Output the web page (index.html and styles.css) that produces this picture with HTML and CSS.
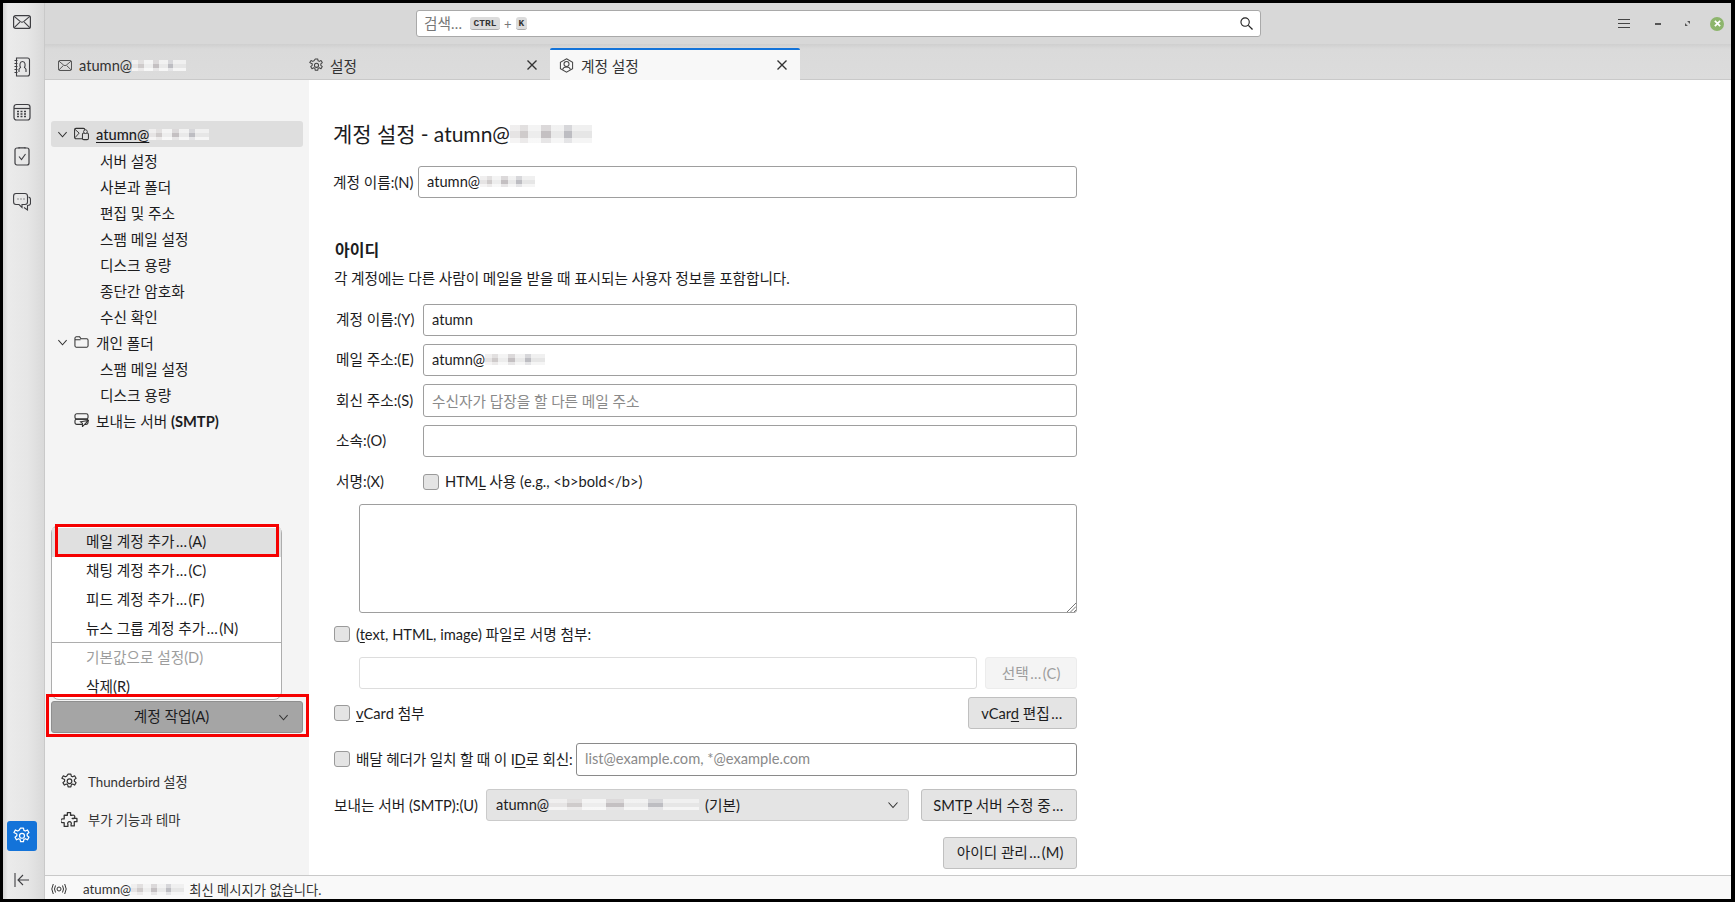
FILE: index.html
```html
<!DOCTYPE html>
<html lang="ko">
<head>
<meta charset="utf-8">
<title>계정 설정</title>
<link rel="stylesheet" href="styles.css">
</head>
<body>
<svg class="defs" width="0" height="0" aria-hidden="true">
  <symbol id="gear" viewBox="0 0 16 16"><path d="M6.7 1h2.600l.4 2 1.300.6 1.800-1 1.400 2.300-1.600 1.300v1.600l1.600 1.300-1.400 2.300-1.800-1-1.300.7-.4 2H6.700l-.4-2-1.300-.7-1.800 1-1.400-2.300 1.600-1.300V6.200L.8 4.900l1.400-2.300 1.800 1 1.300-.6z" fill="none" stroke="currentColor" stroke-width="1.100" stroke-linejoin="round"/><circle cx="8" cy="7.800" r="2.200" fill="none" stroke="currentColor" stroke-width="1.100"/></symbol>
  <symbol id="chev" viewBox="0 0 12 12"><path d="M1.500 3.500 6 8.500l4.500-5" fill="none" stroke="currentColor" stroke-width="1.100"/></symbol>
  <symbol id="mail" viewBox="0 0 18 14"><rect x=".6" y=".6" width="16.800" height="12.800" rx="2" fill="none" stroke="currentColor" stroke-width="1.200"/><path d="m1.200 1.400 6.200 5.200q1.600 1.200 3.200 0l6.200-5.200M1.200 12.600l5.600-5.400M16.800 12.600l-5.600-5.400" fill="none" stroke="currentColor" stroke-width="1.100"/></symbol>
  <symbol id="close" viewBox="0 0 12 12"><path d="m1.500 1.500 9 9m0-9-9 9" fill="none" stroke="currentColor" stroke-width="1.400"/></symbol>
</svg>
<div class="app">
  <nav class="rail">
    <svg class="rail-icon rail-mail"><use href="#mail"/></svg>
    <svg class="rail-icon" viewBox="0 0 18 20"><path d="M3.500 1h11a2 2 0 0 1 2 2v14a2 2 0 0 1-2 2h-11zM1.500 3.500h3m-3 3h3m-3 3h3m-3 3h3m-3 3h3M6 15v-2.500c0-1 .8-1.500 1.500-2-1-2-1-6 2-6s3 4 2 6c.7.5 1.500 1 1.500 2V15" fill="none" stroke="currentColor" stroke-width="1.100"/></svg>
    <svg class="rail-icon" viewBox="0 0 18 18"><rect x="1" y="1.500" width="16" height="15.500" rx="2.500" fill="none" stroke="currentColor" stroke-width="1.200"/><path d="M1 5.500h16" stroke="currentColor" stroke-width="1.200"/><path d="M4 8.500h2m1.500 0h2m1.500 0h2M4 11h2m1.500 0h2m1.500 0h2M4 13.500h2m1.500 0h2m1.500 0h2" stroke="currentColor" stroke-width="1.300"/></svg>
    <svg class="rail-icon" viewBox="0 1 18 20"><rect x="2" y="2" width="14" height="17" rx="2" fill="none" stroke="currentColor" stroke-width="1.200"/><path d="M6 2.500V1h6v1.500" fill="none" stroke="currentColor" stroke-width="1.100"/><path d="m6 10.500 2.500 3L12.500 8" fill="none" stroke="currentColor" stroke-width="1.100"/></svg>
    <svg class="rail-icon" viewBox="0 0 18 19"><path d="M3 1h9a2.500 2.500 0 0 1 2.500 2.500v6A2.500 2.500 0 0 1 12 12H9v3L6 12H3A2.500 2.500 0 0 1 .6 9.500v-6A2.500 2.500 0 0 1 3 1z" fill="none" stroke="currentColor" stroke-width="1.100"/><path d="M15.500 4.500q2 .5 2 2.500v4q0 2-3 2v4.500L11 15" fill="none" stroke="currentColor" stroke-width="1.100"/><path d="M4.500 6.500h1m2 0h1m2 0h1" stroke="currentColor" stroke-width="1.100"/></svg>
    <div class="rail-bottom">
      <span class="rail-active"><svg class="active-gear"><use href="#gear"/></svg></span>
      <svg class="rail-collapse" viewBox="0 0 16 16"><path d="M1 1v14M15 8H4m5-5L4 8l5 5" fill="none" stroke="currentColor" stroke-width="1.100"/></svg>
    </div>
  </nav>
  <div class="window">
    <header class="titlebar">
      <div class="search">
        <span class="search-text">검색…</span>
        <kbd class="key key-ctrl">CTRL</kbd><span class="plus">+</span><kbd class="key">K</kbd>
        <svg class="search-icon" viewBox="0 0 14 14"><circle cx="5.500" cy="5.500" r="4.500" fill="none" stroke="currentColor" stroke-width="1.200"/><path d="m9 9 4.500 4.500" stroke="currentColor" stroke-width="1.400"/></svg>
      </div>
      <div class="winbtns">
        <span class="hamburger"></span>
        <span class="minimize"></span>
        <svg class="restore" viewBox="0 0 6 6"><path d="M0 2.500V6h3.500zM6 3.500V0H2.500z" fill="#555"/></svg>
        <span class="winclose"><svg class="winclose-x" viewBox="0 0 8 8"><path d="m1 1 6 6m0-6-6 6" stroke="#fff" stroke-width="2"/></svg></span>
      </div>
    </header>
    <div class="tabbar">
      <div class="tab tab-first"><svg class="tab-icon tab-mail"><use href="#mail"/></svg><span>atumn@</span><span class="blur blur-54"></span></div>
      <div class="tab tab-second"><svg class="tab-icon"><use href="#gear"/></svg><span>설정</span><svg class="tab-close"><use href="#close"/></svg></div>
      <div class="tab tab-active"><svg class="tab-icon" viewBox="0 0 16 16"><path d="M8 .8 14.500 4.500v7L8 15.200 1.500 11.500v-7z" fill="none" stroke="currentColor" stroke-width="1.100"/><circle cx="8" cy="6.500" r="2.700" fill="none" stroke="currentColor" stroke-width="1.100"/><path d="M3.800 12.500q.7-3 4.200-3t4.200 3" fill="none" stroke="currentColor" stroke-width="1.100"/></svg><span>계정 설정</span><svg class="tab-close"><use href="#close"/></svg></div>
    </div>
    <div class="content">
      <aside class="sidebar">
        <div class="tree">
          <div class="row row-account"><svg class="twisty"><use href="#chev"/></svg><svg class="tree-icon" viewBox="0 0 16 14"><rect x=".6" y="1" width="11" height="11" rx="1.500" fill="none" stroke="currentColor" stroke-width="1.100"/><path d="m1 2 4.500 4L1 11" fill="none" stroke="currentColor" stroke-width="1"/><rect x="9" y="6" width="6.400" height="7" rx="1.500" fill="#dedede" stroke="currentColor" stroke-width="1.100"/><circle cx="12.200" cy="4.500" r="2" fill="#dedede" stroke="currentColor" stroke-width="1"/></svg><span class="account-name">atumn@</span><span class="blur blur-60"></span></div>
          <div class="row row-child">서버 설정</div>
          <div class="row row-child">사본과 폴더</div>
          <div class="row row-child">편집 및 주소</div>
          <div class="row row-child">스팸 메일 설정</div>
          <div class="row row-child">디스크 용량</div>
          <div class="row row-child">종단간 암호화</div>
          <div class="row row-child">수신 확인</div>
          <div class="row"><svg class="twisty"><use href="#chev"/></svg><svg class="tree-icon" viewBox="0 0 16 14"><path d="M1 3a1.500 1.500 0 0 1 1.500-1.500H6l1.500 2h6A1.500 1.500 0 0 1 15 5v6a1.500 1.500 0 0 1-1.500 1.500h-11A1.500 1.500 0 0 1 1 11zM1 4.500h6" fill="none" stroke="currentColor" stroke-width="1.100"/></svg><span>개인 폴더</span></div>
          <div class="row row-child">스팸 메일 설정</div>
          <div class="row row-child">디스크 용량</div>
          <div class="row row-server"><svg class="tree-icon" viewBox="0 0 16 15"><rect x="1" y=".8" width="14" height="5.700" rx="2" fill="none" stroke="currentColor" stroke-width="1.200"/><rect x="1" y="6.500" width="14" height="5.700" rx="2" fill="none" stroke="currentColor" stroke-width="1.200"/><path d="M9 14.500 15.500 8 7 9.500l2 1.500z" fill="#f4f4f4" stroke="currentColor" stroke-width="1.100"/></svg><span>보내는 서버 <b>(SMTP)</b></span></div>
        </div>
        <div class="side-bottom">
          <div class="action-wrap">
            <div class="popup">
              <div class="item item-hover">메일 계정 추가<span class="ell">…</span>(A)</div>
              <div class="item">채팅 계정 추가<span class="ell">…</span>(C)</div>
              <div class="item">피드 계정 추가<span class="ell">…</span>(F)</div>
              <div class="item item-last">뉴스 그룹 계정 추가<span class="ell">…</span>(N)</div>
              <div class="separator"></div>
              <div class="item item-disabled">기본값으로 설정(D)</div>
              <div class="item">삭제(R)</div>
              <div class="redbox redbox-item"></div>
            </div>
            <div class="action-btn"><span class="action-label">계정 작업(A)</span><svg class="action-chev"><use href="#chev"/></svg></div>
            <div class="redbox redbox-action"></div>
          </div>
          <div class="side-links">
            <div class="link"><svg class="link-icon"><use href="#gear"/></svg><span>Thunderbird 설정</span></div>
            <div class="link"><svg class="link-icon" viewBox="0 0 16 16"><path d="M6 1.500h3v2.500h1.500a1.700 1.700 0 1 1 0 3H15v3h-2.500v4h-3v-1.500a1.700 1.700 0 1 0-3 0V14.500H3V11H1.500a1.700 1.700 0 1 1 0-3.500H3V4h3z" fill="none" stroke="currentColor" stroke-width="1.200" stroke-linejoin="round"/></svg><span>부가 기능과 테마</span></div>
          </div>
        </div>
      </aside>
      <main class="pane">
        <h1 class="title">계정 설정 <span class="title-light">- atumn@</span><span class="blur blur-82"></span></h1>
        <div class="account-line">
          <label class="label-n">계정 이름:(N)</label>
          <div class="field field-grow"><span>atumn@</span><span class="blur blur-55"></span></div>
        </div>
        <h2 class="section">아이디</h2>
        <p class="desc">각 계정에는 다른 사람이 메일을 받을 때 표시되는 사용자 정보를 포함합니다.</p>
        <div class="idgrid">
          <label class="id-label">계정 이름:(Y)</label><div class="field">atumn</div>
          <label class="id-label">메일 주소:(E)</label><div class="field"><span>atumn@</span><span class="blur blur-60"></span></div>
          <label class="id-label">회신 주소:(S)</label><div class="field field-tall placeholder">수신자가 답장을 할 다른 메일 주소</div>
          <label class="id-label">소속:(O)</label><div class="field"></div>
          <label class="id-label">서명:(X)</label><div class="check-line"><span class="checkbox"></span><span>HTM<u>L</u> 사용 (e.g., &lt;b&gt;bold&lt;/b&gt;)</span></div>
        </div>
        <div class="textarea"><svg class="grip" viewBox="0 0 10 10"><path d="M10 1 1 10M10 4.500 4.500 10M10 8l-2 2" stroke="#777" stroke-width="1"/></svg></div>
        <div class="check-line line-file"><span class="checkbox"></span><span>(<u>t</u>ext, HTML, image) 파일로 서명 첨부:</span></div>
        <div class="file-line">
          <div class="field field-disabled field-grow"></div>
          <div class="btn btn-disabled btn-pick"><span>선택<span class="ell">…</span>(C)</span></div>
        </div>
        <div class="spread line-vcard">
          <div class="check-line"><span class="checkbox"></span><span><u>v</u>Card 첨부</span></div>
          <div class="btn btn-vcard"><span>vCar<u>d</u> 편집<span class="ell">…</span></span></div>
        </div>
        <div class="reply-line">
          <div class="check-line check-grow"><span class="checkbox"></span><span>배달 헤더가 일치 할 때 이 I<u>D</u>로 회신:</span></div>
          <div class="field field-tall field-dark field-reply placeholder">list@example.com, *@example.com</div>
        </div>
        <div class="smtp-line">
          <label>보내는 서버 (SMTP):(U)</label>
          <div class="select"><span>atumn@</span><span class="blur blur-150"></span><span class="select-default">(기본)</span><svg class="select-chev"><use href="#chev"/></svg></div>
          <div class="btn btn-smtp"><span>SMT<u>P</u> 서버 수정 중<span class="ell">…</span></span></div>
        </div>
        <div class="manage-line"><div class="btn btn-manage"><span>아이디 관리<span class="ell">…</span>(M)</span></div></div>
      </main>
    </div>
    <footer class="status">
      <svg class="status-icon" viewBox="0 0 16 12"><circle cx="8" cy="6" r="2" fill="none" stroke="currentColor"/><path d="M4.500 2.500q-2 3.500 0 7M11.500 2.500q2 3.500 0 7M2.300 1q-3 5 0 10M13.700 1q3 5 0 10" fill="none" stroke="currentColor"/></svg>
      <span>atumn@</span><span class="blur blur-53"></span><span class="status-msg">최신 메시지가 없습니다.</span>
    </footer>
  </div>
</div>
</body>
</html>
```
FILE: styles.css
```css
* { box-sizing: border-box; }
html, body { height: 100%; }
body {
  margin: 0;
  padding: 3px 4px 3px 3px;
  background: #000;
  color: #1c1c1e;
  font-family: Lato, "Noto Sans CJK KR", sans-serif;
  font-size: 14.67px;
  overflow: hidden;
}
.defs { position: absolute; }
svg { display: block; flex: none; }
u { text-underline-offset: 2px; }
.ell { margin: 0 1.500px; }

.app { display: grid; grid-template-columns: 42px 1fr; height: 896px; }

/* spaces rail */
.rail {
  display: flex;
  flex-direction: column;
  align-items: center;
  gap: 25px;
  padding: 9px 4px 0 0;
  color: #3e3e42;
  background: linear-gradient(90deg, #d4d4d4 0, #ebebeb 12%, #e6e6e6 60%, #d9d9d9 100%);
  border-right: 1px solid #c9c9c9;
}
.rail-icon { width: 18px; height: 20px; }
.rail-mail { height: 14px; margin: 3px 0; }
.rail-bottom { margin-top: auto; display: flex; flex-direction: column; align-items: center; padding-bottom: 11px; }
.rail-active { width: 30px; height: 30px; background: #1373d9; border-radius: 3px; display: flex; align-items: center; justify-content: center; color: #fff; }
.active-gear { width: 18px; height: 18px; }
.rail-collapse { width: 16px; height: 16px; margin-top: 21px; }

.window { display: flex; flex-direction: column; min-width: 0; }

/* title bar */
.titlebar { height: 41px; display: flex; align-items: center; padding: 0 7px 0 371px; background: #d8d8d8; }
.search {
  width: 845px;
  height: 27px;
  display: flex;
  align-items: center;
  padding: 0 7px;
  background: #fff;
  border: 1px solid #a9a9a9;
  border-radius: 3px;
  color: #777;
}
.search-text { width: 46px; padding-bottom: 2px; }
.key { height: 13px; padding: 0 3px; font: 700 9.500px/13px "Liberation Mono", monospace; color: #333; background: #dcdcdc; border-radius: 3px; border-bottom: 1px solid #aaa; }
.key-ctrl { width: 30px; text-align: center; padding: 0; }
.plus { margin: 0 4px; font-size: 13px; }
.search-icon { margin-left: auto; width: 13px; height: 13px; color: #222; }
.winbtns { margin-left: auto; display: flex; align-items: center; }
.hamburger { width: 12px; height: 9px; border-top: 1px solid #444; border-bottom: 1px solid #444; margin-right: 25px; background: linear-gradient(#444, #444) center / 100% 1px no-repeat; }
.minimize { width: 6px; height: 2px; background: #555; margin-right: 24px; }
.restore { width: 5px; height: 5px; margin-right: 20px; }
.winclose { width: 14px; height: 14px; border-radius: 50%; background: #8db56c; display: flex; align-items: center; justify-content: center; }
.winclose-x { width: 7px; height: 7px; }

/* tabs */
.tabbar {
  height: 36px;
  display: flex;
  background: linear-gradient(#cfcfcf 0, #dadada 5px, #dcdcdc 100%);
  border-bottom: 1px solid #c9c9c9;
  color: #333;
}
.tab { width: 252px; display: flex; align-items: center; padding-top: 7px; }
.tab-first { width: 253px; padding-left: 13px; }
.tab-second { padding-left: 11px; padding-right: 12px; }
.tab-second .tab-icon { margin-right: 6px; }
.tab-active { width: 250px; margin-top: 4px; margin-bottom: -1px; padding: 0 12px 0 9px; background: #f8f8f8; border-top: 2px solid #1373d9; border-radius: 2px 2px 0 0; }
.tab-icon { width: 15px; height: 15px; margin-right: 7px; color: #444; }
.tab-mail { width: 14px; height: 11px; margin-right: 7px; }
.tab-close { width: 12px; height: 12px; margin-left: auto; color: #333; }

/* blurred-out text */
.blur {
  display: inline-block;
  height: 11px;
  flex: none;
  background-color: #f4f4f4;
  background-image:
    linear-gradient(#ffffff66 0 35%, #0000 35% 70%, #ffffff99 70% 100%),
    linear-gradient(90deg, #e6e4e4 0 12%, #cfcbcb 12% 22%, #ededed 22% 38%, #c4c0c2 38% 50%, #e9e9e9 50% 66%, #bdbdc2 66% 76%, #e6e6e6 76% 100%);
}
.blur-53 { width: 53px; }
.blur-54 { width: 54px; }
.blur-55 { width: 55px; }
.blur-60 { width: 60px; }
.blur-82 { width: 82px; height: 18px; }
.blur-150 { width: 150px; }

.content { flex: 1; display: flex; min-height: 0; }

/* sidebar */
.sidebar { width: 264px; display: flex; flex-direction: column; background: #f4f4f4; padding-top: 41px; }
.tree { padding: 0 6px; }
.row { height: 26px; display: flex; align-items: center; }
.row-account { background: #dedede; border-radius: 3px; font-weight: 500; }
.account-name { text-decoration: underline; text-underline-offset: 2px; }
.row-child { padding-left: 49px; }
.row-server { padding-left: 23px; }
.twisty { width: 11px; height: 11px; margin-left: 6px; margin-right: 6px; color: #333; }
.tree-icon { width: 15px; height: 14px; margin-right: 7px; color: #333; }
.side-bottom { margin-top: auto; padding: 0 6px 37px; }
.action-wrap { position: relative; }
.action-btn { height: 32px; display: flex; align-items: center; justify-content: center; padding-bottom: 4px; background: #a5a5a5; border: 1px solid #8f8f8f; border-radius: 3px; position: relative; }
.action-label { margin-right: 11px; }
.action-chev { position: absolute; right: 13px; top: 10px; width: 11px; height: 11px; color: #333; }
.popup {
  position: absolute;
  left: 0;
  bottom: calc(100% + 1px);
  width: 231px;
  height: 175px;
  padding-top: 2px;
  background: #fff;
  border: 1px solid #adadad;
  border-radius: 8px;
}
.item { height: 29px; line-height: 28px; padding-left: 34px; }
.item-hover { background: #e0e0e0; }
.item-last { height: 27px; line-height: 28px; }
.item-disabled { color: #9d9d9d; margin-top: 2px; height: 28px; line-height: 26px; }
.separator { height: 1px; background: #adadad; }
.redbox { position: absolute; border: 3px solid #f50000; pointer-events: none; }
.redbox-item { left: 3px; top: -2px; width: 224px; height: 33px; }
.redbox-action { left: -5px; right: -6px; top: -7px; bottom: -4px; }
.side-links { margin-top: 29px; }
.link { height: 38px; display: flex; align-items: center; padding-left: 10px; font-size: 13.300px; color: #333; }
.link-icon { width: 17px; height: 17px; margin-right: 10px; color: #333; }

/* main pane */
.pane { flex: 1; background: #fff; padding: 40px 0 0 25px; min-width: 0; }
.pane > * { width: 743px; }
.title { margin: 0 0 0 -1px; font-size: 21px; line-height: 28px; font-weight: 400; display: flex; align-items: center; }
.title-light { margin-left: 5px; }
.account-line { display: flex; align-items: center; margin-top: 18px; }
.label-n { width: 85px; flex: none; margin-left: -1px; padding-bottom: 2px; }
.field {
  height: 32px;
  display: flex;
  align-items: center;
  padding: 0 8px 1px;
  background: #fff;
  border: 1px solid #9e9e9e;
  border-radius: 3px;
}
.field-tall { height: 33px; }
.field-grow { flex: 1; min-width: 0; }
.field-reply { width: 501px; flex: none; }
.field-dark { border-color: #8a8a8a; }
.field-disabled { border-color: #ddd; }
.placeholder { color: #8a8a8a; }
.section { margin: 41px 0 0 1px; font-size: 16px; line-height: 22px; font-weight: 700; }
.desc { margin: 8px 0 0; line-height: 20px; letter-spacing: -.08px; }
.idgrid { display: grid; grid-template-columns: 89px 1fr; row-gap: 8px; margin-top: 15px; align-items: center; }
.id-label { padding: 0 0 3px 2px; white-space: nowrap; }
.check-line { display: flex; align-items: center; gap: 6px; white-space: nowrap; height: 34px; }
.check-line > span:last-child { padding-bottom: 2px; }
.idgrid .check-line > span:last-child { padding-bottom: 4px; }
.check-grow { flex: 1; min-width: 0; letter-spacing: -.17px; }
.checkbox { width: 16px; height: 16px; flex: none; background: #e4e4e4; border: 1px solid #9a9a9a; border-radius: 3px; }
.textarea { height: 109px; margin-top: 5px; margin-left: 25px; width: 718px !important; border: 1px solid #9e9e9e; border-radius: 3px; position: relative; }
.grip { position: absolute; right: 0; bottom: 0; width: 10px; height: 10px; }
.line-file { margin-top: 8px; height: 26px; }
.file-line { display: flex; gap: 8px; margin-top: 10px; padding-left: 25px; }
.btn { height: 32px; display: flex; align-items: center; justify-content: center; padding-bottom: 1px; background: #e4e4e4; border: 1px solid #c0c0c0; border-radius: 3px; flex: none; white-space: nowrap; }
.btn-disabled { background: #f4f4f4; border-color: #ececec; color: #9d9d9d; }
.btn-pick { width: 92px; }
.spread { display: flex; justify-content: space-between; align-items: center; margin-top: 8px; }
.line-vcard .check-line { height: 32px; }
.btn-vcard { width: 109px; }
.reply-line { display: flex; align-items: center; margin-top: 13px; }
.smtp-line { display: flex; align-items: center; margin-top: 13px; }
.smtp-line label { width: 152px; flex: none; white-space: nowrap; padding-bottom: 2px; }
.select { width: 424px; height: 32px; display: flex; align-items: center; padding: 0 9px 1px; background: #e4e4e4; border: 1px solid #cbcbcb; border-radius: 3px; position: relative; }
.select-default { margin-left: 6px; }
.select-chev { position: absolute; right: 9px; top: 9px; width: 12px; height: 12px; color: #333; }
.btn-smtp { width: 156px; margin-left: 12px; }
.manage-line { display: flex; justify-content: flex-end; margin-top: 16px; }
.btn-manage { width: 134px; padding-bottom: 3px; }

/* status bar */
.status { height: 24px; display: flex; align-items: center; padding: 3px 0 0 6px; background: #f9f9f9; border-top: 1px solid #c9c9c9; font-size: 13.300px; color: #333; }
.status-icon { width: 16px; height: 12px; margin-right: 16px; }
.status-msg { margin-left: 5px; }
```
